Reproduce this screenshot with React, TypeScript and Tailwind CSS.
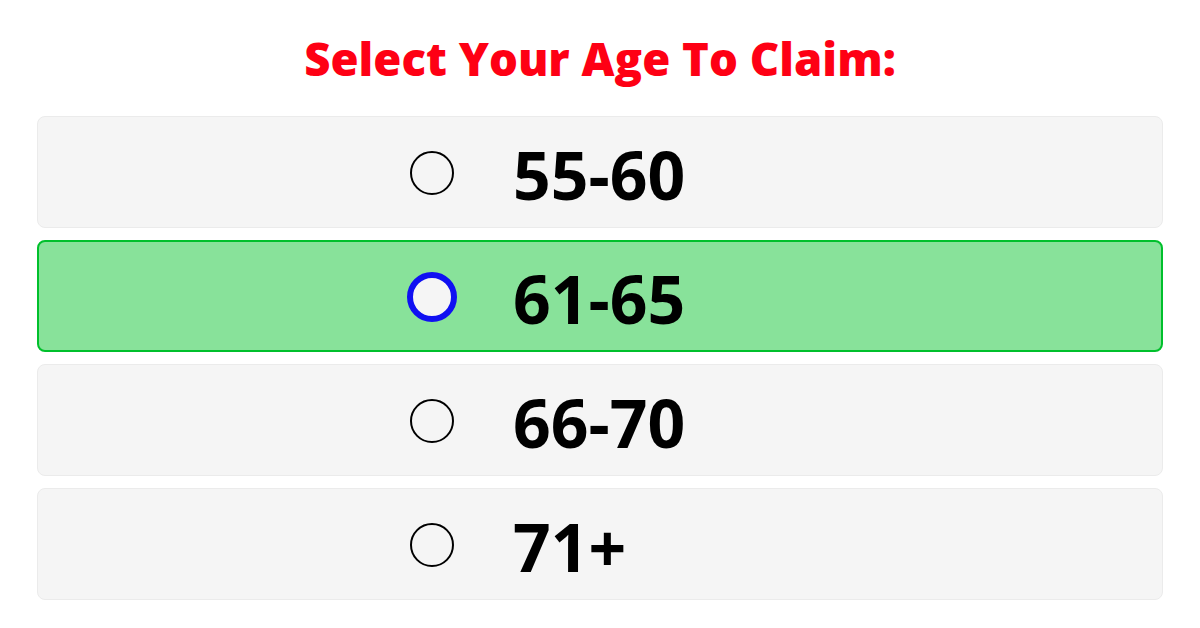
import { useState } from 'react';

const ages = ['55-60', '61-65', '66-70', '71+'];

const App = () => {
  const [selected, setSelected] = useState<string>('61-65');

  return (
    <div className="w-[1200px] h-[628px] bg-white px-[37px] pt-[28px]" style={{ fontFamily: '"Open Sans", sans-serif' }}>
      <h1 className="text-center text-[45.5px] leading-[60px] font-extrabold text-[#fe0014]">
        Select Your Age To Claim:
      </h1>
      <div className="mt-[28px] flex flex-col gap-[12px]">
        {ages.map(age => {
          const active = age === selected;
          return (
            <button
              key={age}
              type="button"
              onClick={() => setSelected(age)}
              className={
                active
                  ? 'h-[112px] w-full flex justify-center items-center rounded-[8px] border-2 border-[#00c02c] bg-[#88e29a]'
                  : 'h-[112px] w-full flex justify-center items-center rounded-[8px] border border-[#ebebeb] bg-[#f5f5f5]'
              }
            >
              <div className="w-[380px] flex items-center">
                <span
                  className={
                    active
                      ? 'w-[50px] h-[50px] -mx-[3px] mt-[2px] rounded-full border-[6px] border-[#1010f2] bg-[#f5f5f5]'
                      : 'w-[44px] h-[44px] mt-[2px] rounded-full border-[2.5px] border-black'
                  }
                />
                <span className="ml-[59px] pt-[3px] text-[66px] leading-none font-bold text-black">
                  {age}
                </span>
              </div>
            </button>
          );
        })}
      </div>
    </div>
  );
};

export default App;
